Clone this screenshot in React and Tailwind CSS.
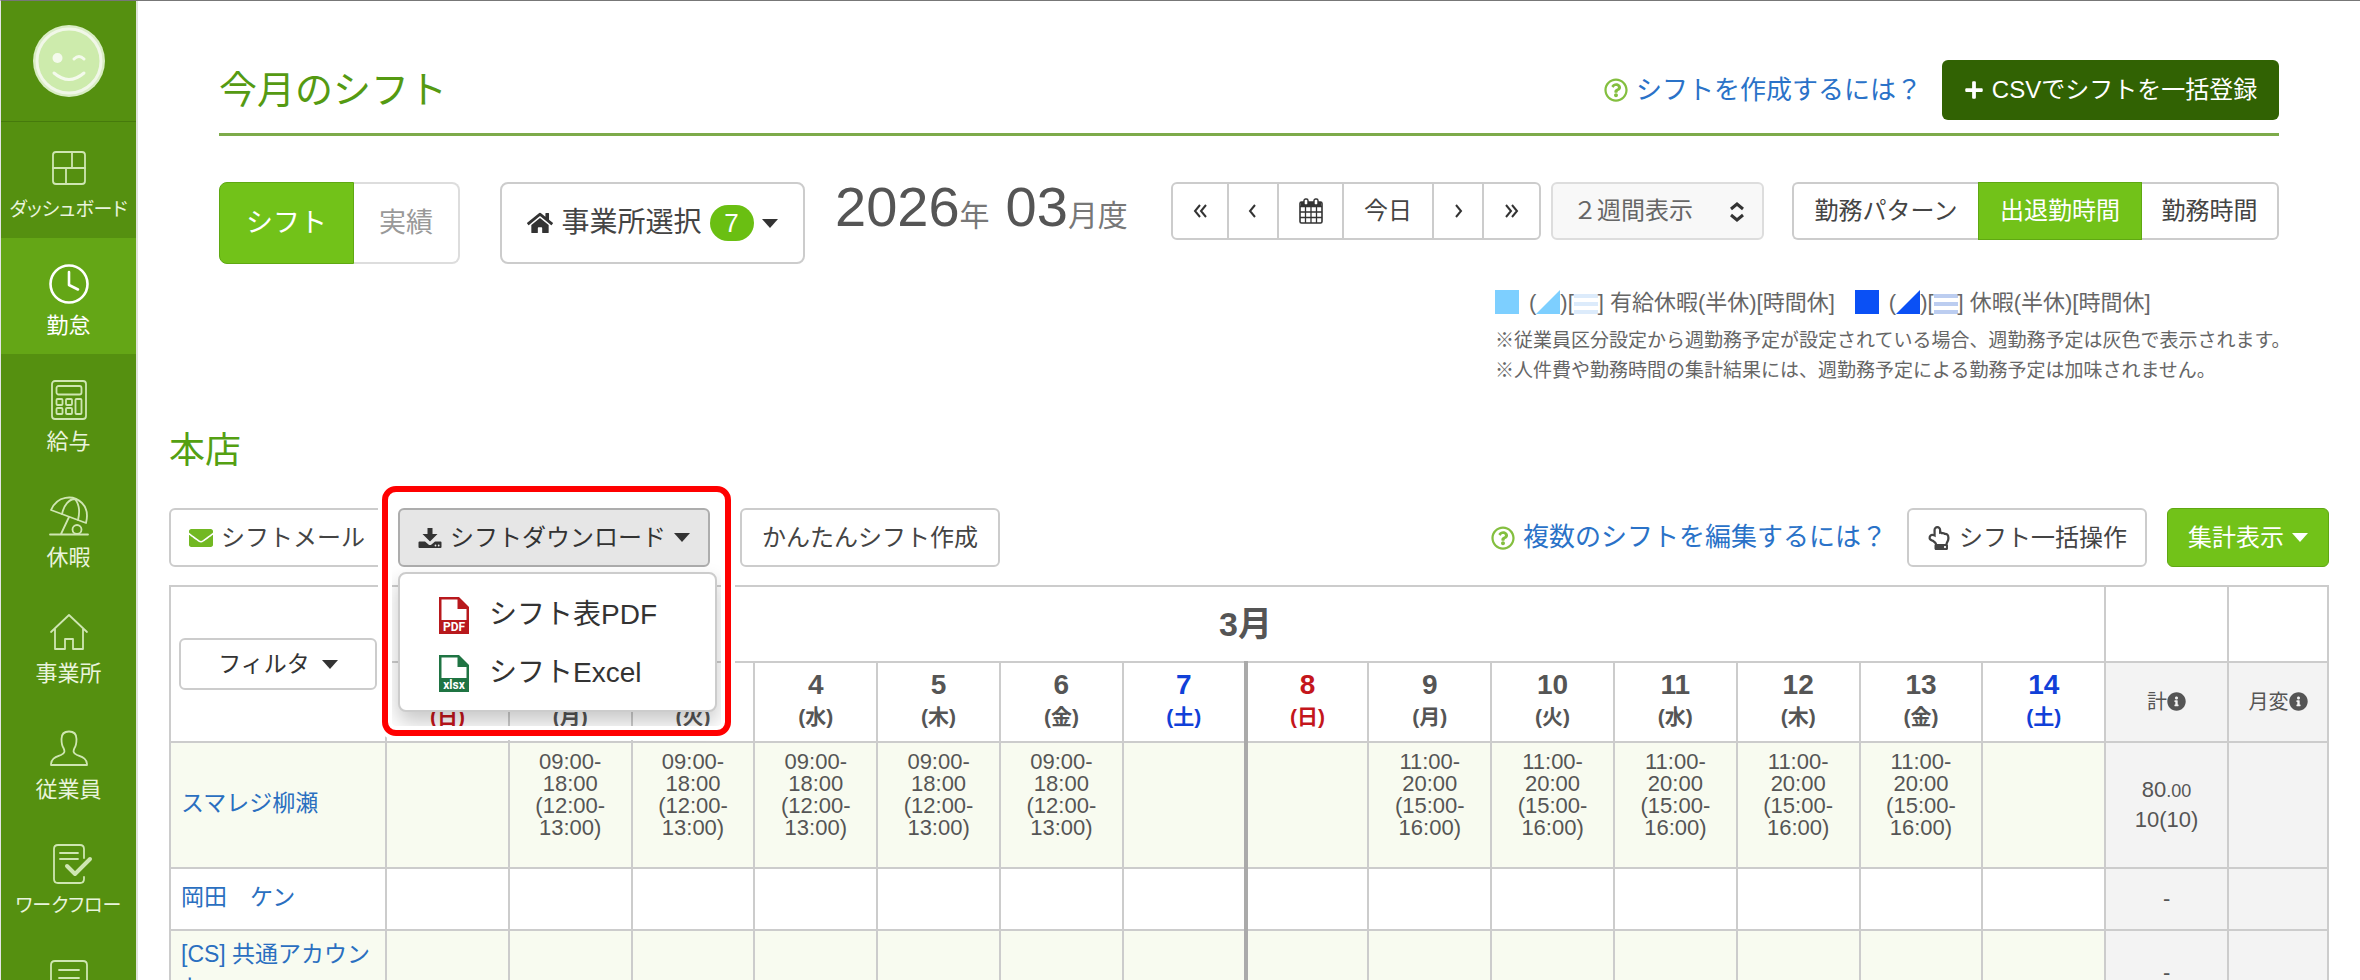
import React, { useState } from 'react';
import {
  FaPlus,
  FaHome,
  FaEnvelope,
  FaRegHandPointUp,
  FaRegQuestionCircle,
  FaInfoCircle,
} from 'react-icons/fa';

const days = [
  { day: 1, week: '日' },
  { day: 2, week: '月' },
  { day: 3, week: '火' },
  { day: 4, week: '水' },
  { day: 5, week: '木' },
  { day: 6, week: '金' },
  { day: 7, week: '土' },
  { day: 8, week: '日' },
  { day: 9, week: '月' },
  { day: 10, week: '火' },
  { day: 11, week: '水' },
  { day: 12, week: '木' },
  { day: 13, week: '金' },
  { day: 14, week: '土' },
];

const early = ['09:00-', '18:00', '(12:00-', '13:00)'];
const late = ['11:00-', '20:00', '(15:00-', '16:00)'];

const staff = [
  {
    name: 'スマレジ柳瀬',
    height: 'h-[126px]',
    shifts: { 2: early, 3: early, 4: early, 5: early, 6: early, 9: late, 10: late, 11: late, 12: late, 13: late },
    total: true,
  },
  { name: '岡田　ケン', height: 'h-[62px]', shifts: {} },
  { name: '[CS] 共通アカウント', height: 'h-[86px]', shifts: {} },
];

const dayColor = (week) => {
  if (week === '日') return 'text-[#c4161c]';
  if (week === '土') return 'text-[#1040d8]';
  return 'text-[#555]';
};

const Caret = ({ className = '' }) => (
  <svg viewBox="0 0 16 9" className={`shrink-0 w-4 h-[9px] ${className}`} fill="currentColor" aria-hidden="true">
    <path d="M0 0h16L8 9z" />
  </svg>
);

const Angle = ({ d }) => (
  <svg viewBox="0 0 14 16" className="w-3.5 h-4 mx-auto" fill="none" stroke="#333" strokeWidth="2" aria-hidden="true">
    <path d={d} />
  </svg>
);

const CalendarIcon = () => (
  <svg viewBox="0 0 24 26" className="w-6 h-[26px] mx-auto" aria-hidden="true">
    <path d="M2 4h20v4.5H2z" fill="#333" />
    <rect x="1" y="4" width="22" height="21" rx="1.5" fill="none" stroke="#333" strokeWidth="1.6" />
    <path d="M1 8.500h22M1 14h22M1 19.500h22M6.500 8.500V25M12 8.500V25M17.500 8.500V25" stroke="#333" strokeWidth="1.3" />
    <rect x="5" y="1" width="4" height="6" rx="1.6" fill="#fff" stroke="#333" strokeWidth="1.4" />
    <rect x="15" y="1" width="4" height="6" rx="1.6" fill="#fff" stroke="#333" strokeWidth="1.4" />
  </svg>
);

const DownloadIcon = () => (
  <svg viewBox="0 0 24 22" className="shrink-0 w-6 h-[22px]" aria-hidden="true">
    <path d="M9.500 1h5v6h5L12 14.500 4.500 7h5z" fill="#333" />
    <path d="M1.500 14.500H7l3.500 3q1.500 1 3 0l3.500-3h5.500q1 0 1 1V20q0 1-1 1h-21q-1 0-1-1v-4.500q0-1 1-1z" fill="#333" />
    <circle cx="17.500" cy="18.500" r="0.9" fill="#e6e6e6" />
    <circle cx="20.700" cy="18.500" r="0.9" fill="#e6e6e6" />
  </svg>
);

const FileIcon = ({ color, label }) => (
  <svg viewBox="0 0 30 37" className="shrink-0 w-[30px] h-[37px]" aria-hidden="true">
    <path d="M0 0h20l10 10v27H0z" fill={color} />
    <path d="M2.500 2.500h16v9.500h9v11h-25z" fill="#fff" />
    <text x="15" y="34" textAnchor="middle" fontSize="12" fontWeight="700" fill="#fff" fontFamily="Roboto, sans-serif">
      {label}
    </text>
  </svg>
);

const menu = [
  {
    label: 'ダッシュボード',
    small: true,
    icon: (
      <>
        <rect x="4" y="4" width="32" height="32" rx="3" />
        <path d="M4 20h32M23 4v16M17 20v16" />
      </>
    ),
  },
  {
    label: '勤怠',
    active: true,
    icon: (
      <g strokeWidth="2.6">
        <circle cx="20" cy="20" r="18.500" />
        <path d="M20 8v13l9 4.500" />
      </g>
    ),
  },
  {
    label: '給与',
    icon: (
      <>
        <rect x="3" y="1" width="34" height="38" rx="3" />
        <rect x="7.500" y="6" width="25" height="8.500" rx="2" />
        <rect x="7.500" y="19" width="6" height="6" rx="1" />
        <rect x="17" y="19" width="6" height="6" rx="1" />
        <rect x="7.500" y="28" width="6" height="6" rx="1" />
        <rect x="17" y="28" width="6" height="6" rx="1" />
        <rect x="26.500" y="19" width="6" height="15" rx="1" />
      </>
    ),
  },
  {
    label: '休暇',
    icon: (
      <>
        <path d="M2 14C8 0 24-2 33 7c5 5 6 12 4 20z" />
        <path d="M13 18C15 9 20 3 26 3M29 24c2-8 1-16-3-21M20 21l-8 17M1 38.500h38" />
        <circle cx="28" cy="33.500" r="4.500" />
      </>
    ),
  },
  {
    label: '事業所',
    icon: <path d="M2 20 20 3l18 17M6 17v20h10V27h8v10h10V17" />,
  },
  {
    label: '従業員',
    icon: (
      <path d="M2 37c0-7 5-8 10-10 4-1.500 4-4 2.500-7-2-3-2-6-2-9 0-5 3-7.500 7.500-7.500s7.500 2.500 7.500 7.500c0 3 0 6-2 9-1.500 3-1.500 5.500 2.500 7 5 2 10 3 10 10z" />
    ),
  },
  {
    label: 'ワークフロー',
    small: true,
    icon: (
      <>
        <path d="M35 14V5q0-4-4-4H9Q5 1 5 5v30q0 4 4 4h22q4 0 4-4v-2M11 9h18M11 15h18" />
        <path d="m18 22 8 8 15-15" strokeWidth="4" />
      </>
    ),
  },
  {
    label: '申請',
    icon: <path d="M2 39V5q0-4 4-4h28q4 0 4 4v34M10 10h20M10 18h20" />,
  },
];

const Sidebar = () => (
  <nav className="w-[137px] shrink-0 bg-[#559010] border-r-2 border-[#dfe3da]">
    <div className="h-[121px] pt-6 border-b border-[#467a0c]">
      <svg viewBox="0 0 72 72" className="w-[72px] h-[72px] mx-auto" aria-hidden="true">
        <circle cx="36" cy="36" r="36" fill="#d9edc4" />
        <circle cx="36" cy="36" r="32" fill="#cdebac" stroke="#f1f7e8" strokeWidth="3" />
        <circle cx="24.500" cy="33" r="5" fill="#f4faec" />
        <path d="M41 34q5-5 10 0M21 48q15 13 30 0" fill="none" stroke="#f4faec" strokeWidth="3" strokeLinecap="round" />
      </svg>
    </div>
    {menu.map((item) => (
      <a
        key={item.label}
        href="#"
        className={`flex flex-col items-center h-[116px] pt-[26px] ${item.active ? 'bg-[#64a616] text-white' : 'text-[#e9f4dc]'}`}
      >
        <svg
          viewBox="0 0 40 40"
          className="w-10 h-10 overflow-visible"
          fill="none"
          stroke={item.active ? '#fff' : '#cfe6b2'}
          strokeWidth="1.8"
          strokeLinejoin="round"
          strokeLinecap="round"
          aria-hidden="true"
        >
          {item.icon}
        </svg>
        <span className={`mt-2 leading-7 whitespace-nowrap ${item.small ? "text-[19px] [font-feature-settings:'palt']" : 'text-[22px]'}`}>
          {item.label}
        </span>
      </a>
    ))}
  </nav>
);

const HelpLink = ({ children }) => (
  <a href="#" className="flex items-center gap-2 text-[26px] text-[#2a72c8]">
    <FaRegQuestionCircle className="w-6 h-6 text-[#84bf3f]" />
    {children}
  </a>
);

const Swatch = ({ solid, stripe }) => (
  <>
    <svg viewBox="0 0 24 24" className="w-6 h-6" aria-hidden="true">
      <path d="M0 0h24v24H0z" fill={solid} />
    </svg>
    <span className="ml-2.5">(</span>
    <svg viewBox="0 0 24 24" className="w-6 h-6" aria-hidden="true">
      <path d="M24 0v24H0z" fill={solid} />
    </svg>
    <span>)[</span>
    <svg viewBox="0 0 24 24" className="w-6 h-6" aria-hidden="true">
      <path d="M0 4h24v4H0zM0 12h24v4H0zM0 20h24v4H0z" fill={stripe} />
    </svg>
    <span className="mr-1.5">]</span>
  </>
);

const Header = () => (
  <header className="flex items-center justify-between h-[76px] pb-[13px] border-b-3 border-[#7dab4a]">
    <h1 className="text-[38px] leading-none text-[#559a12]">今月のシフト</h1>
    <div className="flex items-center gap-5">
      <HelpLink>シフトを作成するには？</HelpLink>
      <button type="button" className="flex items-center justify-center gap-2 w-[337px] h-[60px] rounded-md bg-[#316203] text-white text-2xl">
        <FaPlus className="w-5 h-5" />
        CSVでシフトを一括登録
      </button>
    </div>
  </header>
);

const Controls = () => {
  const [range, setRange] = useState('2w');

  return (
    <div className="flex items-start pt-[46px]">
      <div className="flex h-[82px] text-[27px]">
        <button type="button" className="w-[135px] rounded-l-lg bg-[#72c219] border border-[#5fa812] text-white">シフト</button>
        <button type="button" className="w-[106px] rounded-r-lg border-2 border-l-0 border-[#ddd] text-[#999]">実績</button>
      </div>
      <button type="button" className="flex items-center justify-center ml-10 w-[305px] h-[82px] rounded-lg border-2 border-[#ccc] text-[28px] text-[#444]">
        <FaHome className="w-[26px] h-6 mr-2 text-[#333]" />
        事業所選択
        <span className="ml-2 w-11 h-9 rounded-full bg-[#6abf12] text-white text-[26px] leading-9">7</span>
        <Caret className="ml-2 text-[#333]" />
      </button>
      <div className="ml-[30px] text-[30px] leading-[50px] text-[#777] whitespace-nowrap">
        <span className="text-[56px] text-[#555]">2026</span>年
        <span className="ml-4 text-[56px] text-[#555]">03</span>月度
      </div>
      <div className="flex ml-auto h-[58px] rounded-md border-2 border-[#ccc] divide-x-2 divide-[#ccc] text-2xl text-[#444]">
        <button type="button" aria-label="前の期間へ" className="w-14"><Angle d="M7 2 2 8l5 6M13 2 8 8l5 6" /></button>
        <button type="button" aria-label="前へ" className="w-[50px]"><Angle d="M9 2 4 8l5 6" /></button>
        <button type="button" aria-label="カレンダー" className="w-[65px]"><CalendarIcon /></button>
        <button type="button" className="w-[90px]">今日</button>
        <button type="button" aria-label="次へ" className="w-[50px]"><Angle d="m5 2 5 6-5 6" /></button>
        <button type="button" aria-label="次の期間へ" className="w-[55px]"><Angle d="m1 2 5 6-5 6M7 2l5 6-5 6" /></button>
      </div>
      <div className="relative ml-2.5">
        <select
          aria-label="表示期間"
          value={range}
          onChange={(e) => setRange(e.target.value)}
          className="appearance-none w-[213px] h-[58px] pl-5 rounded-md border-2 border-[#ddd] bg-[#f8f8f8] text-2xl text-[#666]"
        >
          <option value="2w">２週間表示</option>
          <option value="1m">１ヶ月表示</option>
        </select>
        <svg viewBox="0 0 14 20" className="absolute right-5 top-5 w-3.5 h-5 pointer-events-none" fill="none" stroke="#333" strokeWidth="3" aria-hidden="true">
          <path d="m1 7 6-5 6 5M1 13l6 5 6-5" />
        </svg>
      </div>
      <div className="flex ml-7 h-[58px] text-2xl text-[#444]">
        <button type="button" className="w-[186px] rounded-l-md border-2 border-r-0 border-[#ccc]">勤務パターン</button>
        <button type="button" className="w-[164px] bg-[#72c219] border border-[#5fa812] text-white">出退勤時間</button>
        <button type="button" className="w-[137px] rounded-r-md border-2 border-l-0 border-[#ccc]">勤務時間</button>
      </div>
    </div>
  );
};

const Legend = () => (
  <div className="flex justify-end mt-[22px]">
    <div className="w-[784px] text-[#666]">
      <div className="flex items-center h-8 mb-2 text-[22px] whitespace-nowrap">
        <Swatch solid="#7dcfff" stripe="#dcebfb" />
        有給休暇(半休)[時間休]
        <span className="w-5" />
        <Swatch solid="#0a50f5" stripe="#bccdf0" />
        休暇(半休)[時間休]
      </div>
      <p className="text-[19px] leading-[30px] whitespace-nowrap">※従業員区分設定から週勤務予定が設定されている場合、週勤務予定は灰色で表示されます。</p>
      <p className="text-[19px] leading-[30px] whitespace-nowrap">※人件費や勤務時間の集計結果には、週勤務予定による勤務予定は加味されません。</p>
    </div>
  </div>
);

const DownloadMenu = () => (
  <div className="relative">
    <button type="button" aria-expanded="true" className="flex items-center justify-center gap-2 h-[59px] w-[312px] rounded-md border-2 border-[#adadad] bg-[#e6e6e6] text-2xl text-[#333] whitespace-nowrap">
      <DownloadIcon />
      シフトダウンロード
      <Caret />
    </button>
    <ul className="absolute z-10 left-0 top-16 w-[319px] pt-3 pb-2 rounded-lg border-2 border-[#ccc] bg-white shadow-[0_10px_20px_rgba(0,0,0,0.22)] text-[28px] text-[#333]">
      <li>
        <a href="#" className="flex items-center gap-5 h-[58px] pl-[39px]">
          <FileIcon color="#b8191d" label="PDF" />
          シフト表PDF
        </a>
      </li>
      <li>
        <a href="#" className="flex items-center gap-5 h-[58px] pl-[39px]">
          <FileIcon color="#1f7443" label="xlsx" />
          シフトExcel
        </a>
      </li>
    </ul>
    {/* highlight frame around the open menu */}
    <div className="absolute z-20 -left-4 -top-[22px] w-[349px] h-[250px] rounded-[14px] border-6 border-[#ff0000] shadow-[0_0_0_4px_#fff,inset_0_0_0_4px_#fff] pointer-events-none" />
  </div>
);

const Toolbar = () => (
  <div className="flex items-center text-2xl text-[#444]">
    <button type="button" className="flex items-center justify-center gap-2 h-[59px] w-[216px] rounded-md border-2 border-[#ccc] whitespace-nowrap">
      <FaEnvelope className="shrink-0 w-6 h-6 text-[#72b822]" />
      シフトメール
    </button>
    <div className="ml-[13px]">
      <DownloadMenu />
    </div>
    <button type="button" className="ml-[30px] h-[59px] w-[260px] rounded-md border-2 border-[#ccc]">かんたんシフト作成</button>
    <div className="flex items-center ml-auto">
      <HelpLink>複数のシフトを編集するには？</HelpLink>
      <button type="button" className="flex items-center justify-center gap-2 ml-5 h-[59px] w-[240px] rounded-md border-2 border-[#ccc]">
        <FaRegHandPointUp className="w-6 h-6" />
        シフト一括操作
      </button>
      <button type="button" className="flex items-center justify-center gap-2 ml-5 h-[59px] w-[162px] rounded-md border border-[#5fa812] bg-[#72c219] text-white">
        集計表示
        <Caret />
      </button>
    </div>
  </div>
);

const cell = 'border-2 border-[#ccc]';

const ShiftTable = () => (
  <table className="w-full mt-[18px] table-fixed border-collapse text-[#555] text-center">
    <colgroup>
      <col className="w-[216px]" />
      {days.map((d) => <col key={d.day} />)}
      <col />
      <col className="w-[100px]" />
    </colgroup>
    <thead>
      <tr className="h-[76px]">
        <th rowSpan={2} className={`${cell} px-2`}>
          <button type="button" className="flex items-center justify-center gap-3 w-full h-[52px] rounded-md border-2 border-[#ccc] text-[23px] font-normal text-[#333]">
            フィルタ
            <Caret />
          </button>
        </th>
        <th colSpan={14} className={`${cell} text-[34px]`}>3月</th>
        <th className={cell} />
        <th className={cell} />
      </tr>
      <tr className="h-20">
        {days.map((d) => (
          <th key={d.day} className={`${cell} pb-0.5 ${dayColor(d.week)} ${d.day === 7 ? 'border-r-4 border-r-[#aaa]' : ''}`}>
            <div className="text-[28px] leading-8">{d.day}</div>
            <div className="text-[21px] leading-8">({d.week})</div>
          </th>
        ))}
        <th className={`${cell} bg-[#f3f3f3] text-xl font-normal`}>計<FaInfoCircle className="inline w-[19px] h-[19px] -mt-1" /></th>
        <th className={`${cell} bg-[#f3f3f3] text-xl font-normal`}>月変<FaInfoCircle className="inline w-[19px] h-[19px] -mt-1" /></th>
      </tr>
    </thead>
    <tbody>
      {staff.map((person) => (
        <tr key={person.name} className={`${person.height} odd:bg-[#f8fbf0]`}>
          <td className={`${cell} px-2.5 pb-1 text-left text-[23px] leading-[33px]`}>
            <a href="#" className="text-[#2a6fc0]">{person.name}</a>
          </td>
          {days.map((d) => (
            <td key={d.day} className={`${cell} pt-2 align-top text-[22px] leading-[22px] ${d.day === 7 ? 'border-r-4 border-r-[#aaa]' : ''}`}>
              {person.shifts[d.day]?.map((line) => <div key={line}>{line}</div>)}
            </td>
          ))}
          <td className={`${cell} bg-[#f3f3f3] text-[22px] leading-[30px]`}>
            {person.total ? (
              <>
                <div>80<span className="text-lg leading-none">.00</span></div>
                <div>10(10)</div>
              </>
            ) : '-'}
          </td>
          <td className={`${cell} bg-[#f3f3f3]`} />
        </tr>
      ))}
    </tbody>
  </table>
);

const App = () => {
  return (
    <div className="flex h-screen overflow-hidden border-t border-l border-t-[#777] border-l-[#e5e5e5] bg-white font-['Liberation_Sans','Noto_Sans_CJK_JP',sans-serif]">
      <Sidebar />
      <main className="flex-1 min-w-0 pt-[59px] pl-[31px] pr-[31px]">
        <div className="px-[50px]">
          <Header />
          <Controls />
          <Legend />
        </div>
        <h2 className="mt-[45px] mb-[37px] text-4xl leading-10 text-[#54a012]">本店</h2>
        <Toolbar />
        <ShiftTable />
      </main>
    </div>
  );
};

export default App;
